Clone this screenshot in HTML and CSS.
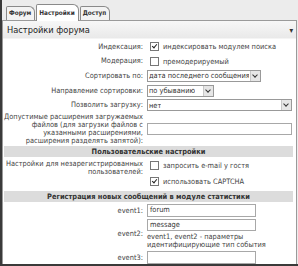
FILE: index.html
```html
<!DOCTYPE html>
<html lang="ru">
<head>
  <meta charset="UTF-8" />
  <title>Настройки форума</title>
  <link rel="stylesheet" href="styles.css">
</head>
<body>
  <div class="window">
    <div class="tabs">
      <span class="tab">Форум</span>
      <span class="tab active">Настройки</span>
      <span class="tab">Доступ</span>
    </div>

    <div class="panel">
      <div class="panel-head">
        <h1>Настройки форума</h1>
        <span class="collapse">&#9662;</span>
      </div>

      <div class="form">
        <div class="row r1">
          <label>Индексация:</label>
          <div class="value"><span class="check on"></span>индексировать модулем поиска</div>
        </div>
        <div class="row r2">
          <label>Модерация:</label>
          <div class="value"><span class="check"></span>премодерируемый</div>
        </div>
        <div class="row r3">
          <label>Сортировать по:</label>
          <div class="value"><div class="select w-sort"><span>дата последнего сообщения</span><i></i></div></div>
        </div>
        <div class="row r4">
          <label>Направление сортировки:</label>
          <div class="value"><div class="select w-dir"><span>по убыванию</span><i></i></div></div>
        </div>
        <div class="row r5">
          <label>Позволить загрузку:</label>
          <div class="value"><div class="select w-full"><span>нет</span><i></i></div></div>
        </div>
        <div class="row r6">
          <label>Допустимые расширения загружаемых<br>файлов (для загрузки файлов с<br>указанными расширениями,<br>расширения разделять запятой):</label>
          <div class="value"><div class="input w-full"></div></div>
        </div>

        <div class="section">Пользовательские настройки</div>

        <div class="row r7">
          <label>Настройки для незарегистрированных пользователей:</label>
          <div class="value stack">
            <div class="line"><span class="check"></span>запросить e-mail у гостя</div>
            <div class="line"><span class="check on"></span>использовать CAPTCHA</div>
          </div>
        </div>

        <div class="section">Регистрация новых сообщений в модуле статистики</div>

        <div class="row r8">
          <label>event1:</label>
          <div class="value"><div class="input w-event">forum</div></div>
        </div>
        <div class="row r9">
          <label>event2:</label>
          <div class="value stack">
            <div class="input w-event">message</div>
            <p class="note">event1, event2 - параметры идентифицирующие тип события</p>
          </div>
        </div>
        <div class="row r10">
          <label>event3:</label>
          <div class="value"><div class="input w-event"></div></div>
        </div>
      </div>
    </div>
  </div>
</body>
</html>
```

FILE: styles.css
```css
body {
  margin: 0;
  padding: 0;
  background-color: #fff;
  font-family: 'DejaVu Sans Condensed', 'DejaVu Sans', sans-serif;
  font-size: 7.4px;
  color: #333;
}

.window {
  width: 296px;
  height: 264px;
  border-left: 2px solid #3a3a3a;
  border-bottom: 2px solid #3a3a3a;
  background-color: #ececec;
  overflow: hidden;
}

.tabs {
  display: flex;
  align-items: flex-end;
  height: 20px;
  padding-left: 4px;
  box-sizing: border-box;
}

.tab {
  display: block;
  height: 13px;
  line-height: 13px;
  padding: 0 3px 0 2px;
  margin-right: 1px;
  border: 1px solid #8a8a8a;
  border-bottom: none;
  border-radius: 2px 6px 0 0;
  background-color: #f3f3f3;
  font-weight: bold;
  font-size: 6.4px;
  color: #333;
}

.tab.active {
  height: 16px;
  line-height: 16px;
  background-color: #fff;
  position: relative;
  top: 1px;
}

.panel {
  height: 244px;
  margin-right: 1px;
  border: 1px solid #9a9a9a;
  border-bottom: none;
  background-color: #fff;
}

.panel-head {
  display: flex;
  align-items: center;
  justify-content: space-between;
  height: 17px;
  padding: 0 3px 0 4px;
  background: linear-gradient(#f7f7f7, #e9e9e9);
  border-bottom: 1px solid #f4f4f4;
}

.panel-head h1 {
  margin: 0;
  font-size: 9.2px;
  font-weight: normal;
  color: #222;
}

.collapse {
  font-size: 8px;
  color: #333;
  align-self: flex-start;
  margin-top: 5px;
}

.form {
  padding: 0 3px 0 0;
}

.row {
  display: grid;
  grid-template-columns: 140px 1fr;
  column-gap: 4px;
  align-items: center;
}

.row label {
  text-align: right;
  line-height: 7.8px;
  color: #444;
}

.value {
  display: flex;
  align-items: center;
  white-space: nowrap;
  color: #444;
}

.value.stack {
  flex-direction: column;
  align-items: flex-start;
}

.r1 { height: 15px; }
.r2 { height: 14px; }
.r3 { height: 15px; }
.r4 { height: 15px; }
.r5 { height: 14px; }
.r6 { height: 34px; }
.r7 { height: 34px; align-items: start; }
.r8 { height: 17px; }
.r9 { height: 30px; }
.r10 { height: 17px; }

.r6 label {
  margin-left: -6px;
  white-space: nowrap;
}

.r7 label {
  padding-top: 3px;
}

.r7 .line {
  display: flex;
  align-items: center;
  height: 16px;
}

.check {
  display: inline-block;
  width: 7px;
  height: 7px;
  margin: 0 4px 0 3px;
  border: 1px solid #777;
  background-color: #fff;
  position: relative;
}

.check.on::after {
  content: '';
  position: absolute;
  left: 2px;
  top: 0;
  width: 2px;
  height: 4px;
  border-right: 1px solid #222;
  border-bottom: 1px solid #222;
  transform: rotate(40deg);
}

.select {
  display: flex;
  align-items: center;
  justify-content: space-between;
  height: 12px;
  box-sizing: border-box;
  border: 1px solid #999;
  background-color: #fff;
  padding-left: 1px;
  color: #333;
  overflow: hidden;
}

.select span {
  overflow: hidden;
}

.select i {
  flex: none;
  width: 9px;
  height: 10px;
  margin-left: 1px;
  background-color: #e6e6e6;
  border-left: 1px solid #c8c8c8;
  position: relative;
}

.select i::after {
  content: '';
  position: absolute;
  left: 2px;
  top: 2px;
  width: 3px;
  height: 3px;
  border-right: 1px solid #333;
  border-bottom: 1px solid #333;
  transform: rotate(45deg);
}

.input {
  height: 12px;
  line-height: 10px;
  box-sizing: border-box;
  border: 1px solid #a8a8a8;
  background-color: #fff;
  padding-left: 2px;
  color: #333;
}

.w-sort { width: 114px; }
.w-dir { width: 67px; }
.w-full { width: 145px; }
.w-event { width: 109px; }

.r8 .input,
.r10 .input { height: 13px; }

.note {
  margin: 2px 0 0 0;
  line-height: 7.8px;
  white-space: normal;
  color: #444;
}

.section {
  height: 11px;
  line-height: 11px;
  margin-left: 1px;
  background-color: #dcdcdc;
  text-align: center;
  font-weight: bold;
  color: #333;
}
```
